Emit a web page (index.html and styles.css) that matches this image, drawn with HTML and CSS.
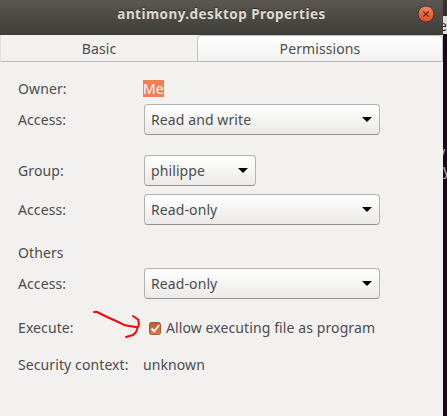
FILE: index.html
```html
<!DOCTYPE html>
<html lang="en">
<head>
    <meta charset="UTF-8">
    <meta name="viewport" content="width=device-width, initial-scale=1.0">
    <title>antimony.desktop Properties</title>
    <link rel="stylesheet" href="styles.css">
</head>
<body>
    <div class="window">
        <div class="titlebar">
            <span class="title">antimony.desktop Properties</span>
            <svg class="close" width="18" height="18" viewBox="0 0 18 18">
                <defs>
                    <linearGradient id="closeBg" x1="0" y1="0" x2="0" y2="1">
                        <stop offset="0" stop-color="#f58a62"/>
                        <stop offset="0.5" stop-color="#ee6238"/>
                        <stop offset="1" stop-color="#e2501f"/>
                    </linearGradient>
                </defs>
                <circle cx="9" cy="9" r="8" fill="url(#closeBg)" stroke="#383733"/>
                <path d="M6.3 6.3l5.4 5.4M11.7 6.3l-5.4 5.4" stroke="#4a2d1c" stroke-width="1.2"/>
            </svg>
        </div>
        <div class="tabs">
            <div class="tab">Basic</div>
            <div class="tab active">Permissions</div>
        </div>
        <div class="content">
            <div class="row owner">
                <label>Owner:</label>
                <span class="value"><span class="selected">Me</span></span>
            </div>
            <div class="row">
                <label>Access:</label>
                <div class="select"><span>Read and write</span><i></i></div>
            </div>
            <div class="row group">
                <label>Group:</label>
                <div class="select small"><span>philippe</span><i></i></div>
            </div>
            <div class="row group-access">
                <label>Access:</label>
                <div class="select"><span>Read-only</span><i></i></div>
            </div>
            <div class="row text others">
                <label>Others</label>
            </div>
            <div class="row">
                <label>Access:</label>
                <div class="select"><span>Read-only</span><i></i></div>
            </div>
            <div class="row text execute">
                <label>Execute:</label>
                <svg class="check" width="12" height="13" viewBox="0 0 12 13">
                    <defs>
                        <linearGradient id="checkBg" x1="0" y1="0" x2="0" y2="1">
                            <stop offset="0" stop-color="#c9562b"/>
                            <stop offset="1" stop-color="#e07a50"/>
                        </linearGradient>
                    </defs>
                    <rect x="0.5" y="0.5" width="11" height="12" rx="2" fill="url(#checkBg)" stroke="#a3583b"/>
                    <path d="M2.5 6.5L5 9.3L10.3 3" fill="none" stroke="#fff" stroke-width="1.9"/>
                </svg>
                <span class="allow">Allow executing file as program</span>
            </div>
            <div class="row text security">
                <label>Security context:</label>
                <span class="value">unknown</span>
            </div>
        </div>
        <svg class="arrow" width="52" height="32" viewBox="0 0 52 32">
            <path d="M4 4H7L17 9L25 12.5L35 17.3L47 19.2M43 8L48 11.5L49 16L46 24L43 27L36 29" fill="none" stroke="#fa0606" stroke-width="2" stroke-linecap="round" stroke-linejoin="round"/>
        </svg>
    </div>
    <div class="terminal">
        <div class="terminal-bar"></div>
        <div class="terminal-menu">e</div>
        <div class="terminal-text">y<br>y</div>
    </div>
</body>
</html>
```

FILE: styles.css
```css
*{
    margin: 0;
    padding: 0;
    box-sizing: border-box;
}
body{
    display: flex;
    width: 447px;
    height: 416px;
    overflow: hidden;
    font-family: "Noto Sans", sans-serif;
    font-size: 14px;
    line-height: 18px;
    letter-spacing: 0.1px;
    color: #4c4c4c;
    white-space: nowrap;
}
.window{
    position: relative;
    width: 443px;
    height: 416px;
    background: #f2f1f0;
}
.titlebar{
    position: relative;
    height: 35px;
    padding-top: 5px;
    background: linear-gradient(#59574f, #3e3d39);
    text-align: center;
}
.title{
    font-size: 13.5px;
    font-weight: bold;
    letter-spacing: 0.45px;
    color: #dfdbd2;
    text-shadow: 0 -1px #2e2d2a;
}
.close{
    position: absolute;
    top: 5px;
    right: 8px;
}
.tabs{
    display: flex;
    height: 27px;
    border-left: 1px solid #e2e0de;
}
.tab{
    width: 196px;
    padding-top: 5px;
    border-bottom: 1px solid #bdbbb9;
    text-align: center;
}
.tab.active{
    flex: 1;
    border: 1px solid #c4c2c0;
    border-bottom-color: #bdbbb9;
    border-radius: 4px 4px 0 0;
    padding-top: 4px;
    background: linear-gradient(#fff, #f2f1f0);
}
.content{
    padding: 18px 0 0 18px;
}
.row{
    display: flex;
    align-items: center;
    height: 31px;
}
.row label{
    width: 126px;
}
.owner,
.text{
    height: 18px;
}
.owner{
    margin-bottom: 6px;
}
.value{
    margin-left: -1px;
}
.selected{
    display: block;
    height: 17px;
    margin-top: -1px;
    line-height: 18px;
    background: #f07f54;
    color: #fff;
}
.select{
    display: flex;
    align-items: center;
    justify-content: space-between;
    width: 236px;
    height: 31px;
    padding: 0 7px 0 6px;
    border: 1px solid #b4b2b0;
    border-bottom-color: #949290;
    border-radius: 4px;
    background: linear-gradient(#fff, #ebeae8);
}
.select.small{
    width: 112px;
}
.select i{
    border: 5px solid transparent;
    border-top-color: #000;
    border-bottom: 0;
}
.group{
    margin-top: 20px;
}
.group-access{
    margin-top: 8px;
}
.others{
    margin: 19px 0 6px;
}
.execute{
    margin-top: 20px;
}
.check{
    margin-left: 5px;
}
.allow{
    margin-left: 5px;
}
.security{
    margin-top: 19px;
}
.arrow{
    position: absolute;
    left: 90px;
    top: 308px;
}
/* strip of the terminal window behind the dialog */
.terminal{
    width: 4px;
    height: 416px;
    overflow: hidden;
    background: #1f0519;
}
.terminal-bar{
    height: 16px;
    background: #32312d;
}
.terminal-menu{
    height: 18px;
    background: #dedcda;
    color: #35233b;
    line-height: 20px;
    text-indent: -4px;
}
.terminal-text{
    margin-top: 109px;
    color: #b5b5ad;
    text-indent: -5px;
}
```
